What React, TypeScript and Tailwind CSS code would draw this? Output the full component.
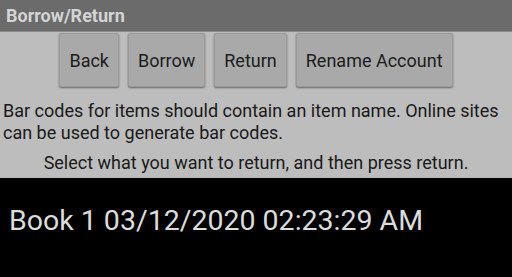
const buttons = ["Back", "Borrow", "Return", "Rename Account"];

const App: React.FC = () => {
  return (
    <div
      className="w-[512px] h-[277px] overflow-hidden flex flex-col bg-[#bdbdbd]"
      style={{ fontFamily: "Roboto, 'Liberation Sans', sans-serif" }}
    >
      {/* Title bar */}
      <div className="h-[32px] shrink-0 bg-[#6b6b6b] border-b border-[#8a8a8a] flex items-center px-[6px]">
        <span className="text-[18px] font-bold text-[#d4d4d4] leading-none">Borrow/Return</span>
      </div>

      {/* Buttons */}
      <div className="flex justify-center gap-[9px] pt-[1px]">
        {buttons.map((label) => (
          <button
            key={label}
            className="h-[54px] px-[9px] bg-[#a9a9a9] border border-[#9a9a9a] rounded-[2px] shadow-[0_1px_2px_rgba(0,0,0,0.45)] text-[18px] text-[#1c1c1c]"
          >
            {label}
          </button>
        ))}
      </div>

      {/* Info text */}
      <div className="px-[3px] pt-[13px] text-[18px] leading-[22px] text-[#1a1a1a]">
        <p>Bar codes for items should contain an item name. Online sites can be used to generate bar codes.</p>
        <p className="text-center mt-[8px]">Select what you want to return, and then press return.</p>
      </div>

      {/* List */}
      <div className="flex-1 bg-black mt-[4px] px-[9px] pt-[26px]">
        <p className="text-[28.5px] leading-[34px] text-[#dcdcdc]">Book 1 03/12/2020 02:23:29 AM</p>
      </div>
    </div>
  );
};

export default App;
